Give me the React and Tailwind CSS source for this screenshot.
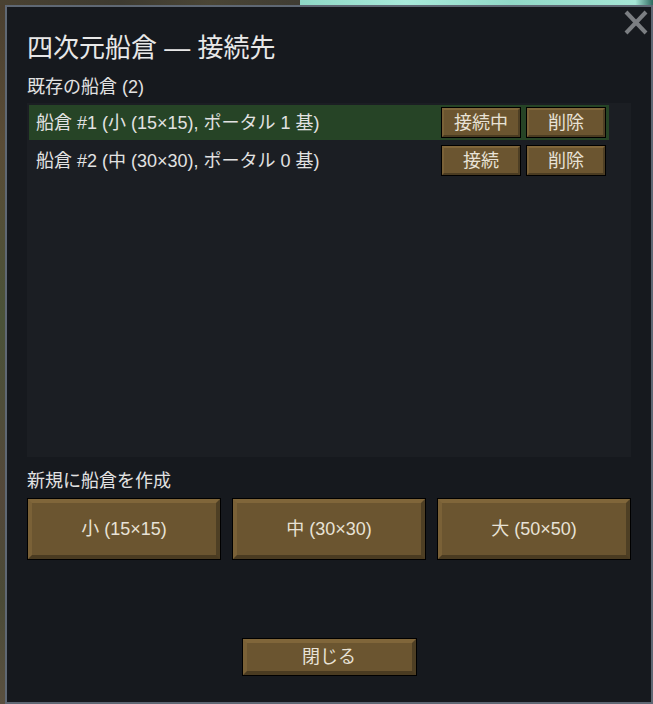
import React from "react";

const FONT = { fontFamily: '"Liberation Sans", "Noto Sans CJK JP", sans-serif' };

function SmallBtn({ children }) {
  return (
    <div className="w-[80px] h-[31px] border border-black flex shrink-0">
      <div className="flex-1 flex items-center justify-center bg-[#6b5530] border-2 border-t-[#80663a] border-l-[#7a6137] border-r-[#4e3f24] border-b-[#4a3b21] text-[18px] leading-none text-[#e8e2d6]">
        {children}
      </div>
    </div>
  );
}

function BigBtn({ children, className }) {
  return (
    <div className={"border border-black flex " + className}>
      <div className="flex-1 flex items-center justify-center bg-[#6b5530] border-4 border-t-[#80663a] border-l-[#7a6137] border-r-[#4e3f24] border-b-[#4a3b21] text-[18px] leading-none text-[#e8e2d6]">
        {children}
      </div>
    </div>
  );
}

function Row({ label, first, active }) {
  return (
    <div
      className={
        "h-[35px] flex items-center pl-[7px] pr-[3px] " +
        (active ? "bg-[#264426]" : "")
      }
    >
      <div className="flex-1 text-[18px] leading-none text-[#e2e2e2]">{label}</div>
      <div className="flex gap-[5px]">
        <SmallBtn>{first}</SmallBtn>
        <SmallBtn>削除</SmallBtn>
      </div>
    </div>
  );
}

export default function App() {
  return (
    <div className="w-[653px] h-[704px] overflow-hidden flex flex-col bg-[#4d4535]" style={FONT}>
      <div className="h-[5px] flex shrink-0">
        <div className="w-[300px] bg-[linear-gradient(90deg,#4a4232,#3d3a30_40%,#4a4535_70%,#3f3c33)]" />
        <div className="flex-1 bg-[linear-gradient(90deg,#8fd8c6,#a9eadb_30%,#92d9c8_60%,#a6e6d6_95%,#2f6a60)]" />
      </div>
      <div className="flex flex-1">
        <div className="w-[5px] shrink-0 bg-[linear-gradient(180deg,#4b4030,#5a4c36_20%,#4a5238_45%,#54483a_70%,#4a4a36_85%,#5a5040)]" />
        <div className="relative w-[648px] h-[699px] border-2 border-[#5f6874] bg-[#16191e] pl-[20px] pr-[20px] pt-[26px] flex flex-col">
          <button className="absolute top-[3px] right-[3px] w-[24px] h-[25px]">
            <svg width="24" height="25" viewBox="0 0 24 25">
              <line x1="2" y1="2" x2="22" y2="23" stroke="#7b7e82" strokeWidth="4" />
              <line x1="22" y1="2" x2="2" y2="23" stroke="#7b7e82" strokeWidth="4" />
            </svg>
          </button>
          <div className="h-[30px] flex items-center text-[26px] leading-none text-[#e8e8e8]">
            四次元船倉 — 接続先
          </div>
          <div className="h-[24px] mt-[12px] flex items-center text-[18px] leading-none text-[#e2e2e2]">
            既存の船倉 (2)
          </div>
          <div className="mt-[4px] h-[354px] bg-[#1b1e23] pt-[2px] pl-[2px] pr-[22px] flex flex-col gap-[3px]">
            <Row label="船倉 #1 (小 (15×15), ポータル 1 基)" first="接続中" active />
            <Row label="船倉 #2 (中 (30×30), ポータル 0 基)" first="接続" />
          </div>
          <div className="h-[24px] mt-[12px] flex items-center text-[18px] leading-none text-[#e2e2e2]">
            新規に船倉を作成
          </div>
          <div className="mt-[5px] grid grid-cols-3 gap-[11px]">
            <BigBtn className="h-[62px]">小 (15×15)</BigBtn>
            <BigBtn className="h-[62px]">中 (30×30)</BigBtn>
            <BigBtn className="h-[62px]">大 (50×50)</BigBtn>
          </div>
          <div className="mt-[78px] flex justify-center">
            <BigBtn className="w-[175px] h-[38px]">閉じる</BigBtn>
          </div>
        </div>
      </div>
    </div>
  );
}
